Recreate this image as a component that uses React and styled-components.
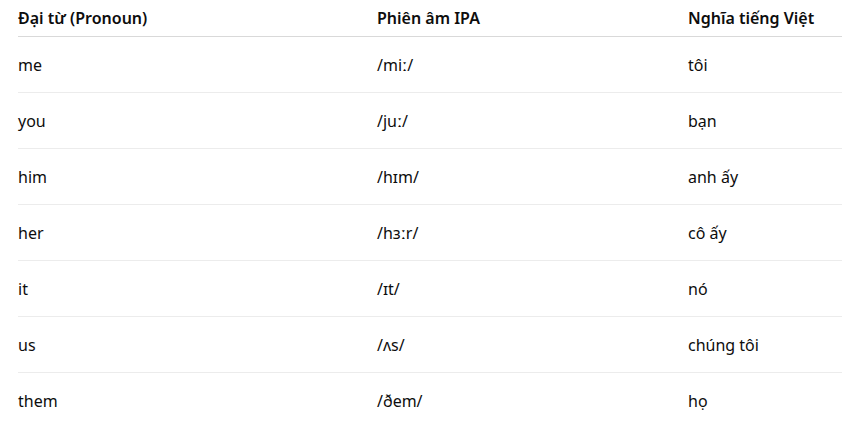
import styled, { createGlobalStyle } from "styled-components";

const GlobalStyle = createGlobalStyle`
  html, body {
    margin: 0;
    padding: 0;
    background: #ffffff;
  }
  body {
    font-family: "Noto Sans", "Open Sans", sans-serif;
    color: #0d0d0d;
  }
`;

const Wrapper = styled.div`
  padding-left: 18px;
  overflow: hidden;
`;

const Table = styled.div`
  display: grid;
  grid-template-columns: 359px 311px 1fr;
  font-size: 16px;
`;

const HeadCell = styled.div`
  height: 36px;
  display: flex;
  align-items: center;
  font-weight: 600;
  border-bottom: 1px solid #d9d9d9;
  white-space: nowrap;
`;

const Cell = styled.div`
  height: 55px;
  display: flex;
  align-items: center;
  border-bottom: 1px solid ${(p) => (p.$last ? "transparent" : "#ececec")};
  white-space: nowrap;
`;

const rows = [
  ["me", "/miː/", "tôi"],
  ["you", "/juː/", "bạn"],
  ["him", "/hɪm/", "anh ấy"],
  ["her", "/hɜːr/", "cô ấy"],
  ["it", "/ɪt/", "nó"],
  ["us", "/ʌs/", "chúng tôi"],
  ["them", "/ðem/", "họ"],
];

export default function App() {
  return (
    <>
      <GlobalStyle />
      <Wrapper>
        <Table>
          <HeadCell>Đại từ (Pronoun)</HeadCell>
          <HeadCell>Phiên âm IPA</HeadCell>
          <HeadCell>Nghĩa tiếng Việt</HeadCell>
          {rows.map((row, i) =>
            row.map((text, j) => (
              <Cell key={`${i}-${j}`} $last={i === rows.length - 1}>
                {text}
              </Cell>
            ))
          )}
        </Table>
      </Wrapper>
    </>
  );
}
